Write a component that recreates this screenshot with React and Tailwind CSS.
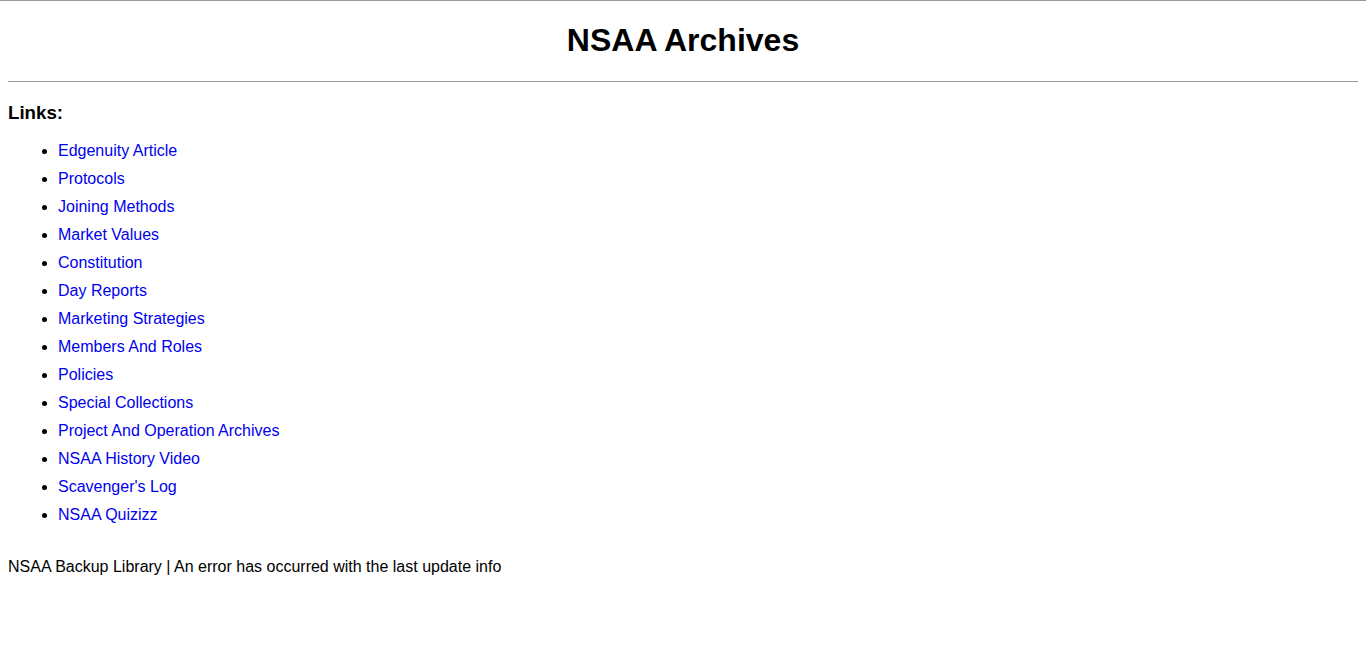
import React from 'react'

const links = [
  "Edgenuity Article",
  "Protocols",
  "Joining Methods",
  "Market Values",
  "Constitution",
  "Day Reports",
  "Marketing Strategies",
  "Members And Roles",
  "Policies",
  "Special Collections",
  "Project And Operation Archives",
  "NSAA History Video",
  "Scavenger's Log",
  "NSAA Quizizz",
];

export default function App() {
  return (
    <div className="min-h-screen bg-white border-t border-[#999999] font-['Liberation_Sans',Arial,sans-serif] text-black text-[16px]">
      <div className="px-2">
        <h1 className="mt-[21px] text-center text-[32px] font-bold leading-[37px]">NSAA Archives</h1>
        <hr className="mt-[22px] border-0 border-t border-[#999999]" />
        <h3 className="mt-[20px] text-[18.72px] font-bold leading-[22px]">Links:</h3>
        <ul className="mt-[13px] list-disc pl-[50px]">
          {links.map((l, i) => (
            <li key={i} className="leading-[28px]">
              <a href="#" className="text-[#0000ee] no-underline">{l}</a>
            </li>
          ))}
        </ul>
        <p className="mt-[29px] leading-[18px]">NSAA Backup Library | An error has occurred with the last update info</p>
      </div>
    </div>
  );
}
